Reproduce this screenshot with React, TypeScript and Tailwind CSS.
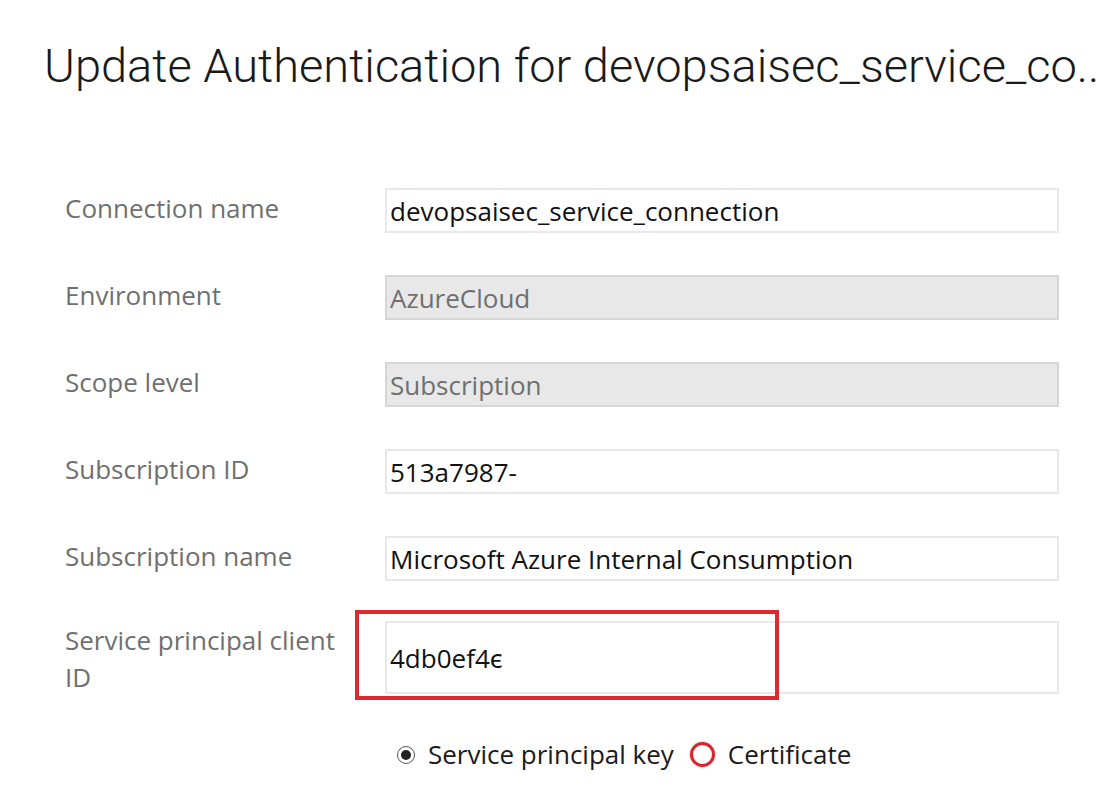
const font = { fontFamily: '"Open Sans", "Noto Sans", sans-serif' };

type Row = { label: string; value: string; disabled?: boolean };

const rows: Row[] = [
  { label: "Connection name", value: "devopsaisec_service_connection" },
  { label: "Environment", value: "AzureCloud", disabled: true },
  { label: "Scope level", value: "Subscription", disabled: true },
  { label: "Subscription ID", value: "513a7987-" },
  { label: "Subscription name", value: "Microsoft Azure Internal Consumption" },
];

function Field({ label, value, disabled }: Row) {
  return (
    <div className="flex items-start">
      <div className="w-[320px] shrink-0 pt-[1px] text-[26px] text-[#6f6f6f]">{label}</div>
      <div
        className={`flex h-[45px] w-[674px] items-center border-2 px-[3px] pt-[2px] text-[26px] ${
          disabled
            ? "border-[#d6d6d6] bg-[#e8e8e8] text-[#6f6f6f]"
            : "border-[#e8e8e8] bg-white text-[#111]"
        }`}
      >
        {value}
      </div>
    </div>
  );
}

export default function App() {
  return (
    <div className="h-[787px] w-[1106px] overflow-hidden bg-white" style={font}>
      <h1
        className="whitespace-nowrap pl-[44px] pt-[34px] text-[47px] font-light leading-[64px] text-[#1a1a1a]"
        style={{ fontFamily: "Roboto, sans-serif" }}
      >
        Update Authentication for devopsaisec_service_co..
      </h1>
      <div className="flex flex-col gap-[42px] pl-[65px] pt-[90px]">
        {rows.map((r) => (
          <Field key={r.label} {...r} />
        ))}
        <div className="-mt-[2px] flex items-start">
          <div className="w-[320px] shrink-0 pt-[1px] text-[26px] leading-[37px] text-[#6f6f6f]">
            Service principal client
            <br />
            ID
          </div>
          <div className="relative flex h-[73px] w-[674px] items-center border-2 border-[#e8e8e8] px-[3px] pt-[2px] text-[26px] text-[#111]">
            4db0ef4&#x03F5;
            <div className="absolute -left-[32px] -top-[13px] h-[90px] w-[424px] border-4 border-[#dc2a30]" />
          </div>
        </div>
        <div className="-mt-[3px] flex items-center pl-[332px] text-[26px] text-[#1a1a1a]">
          <span className="flex h-[18px] w-[18px] items-center justify-center rounded-full border border-[#555]">
            <span className="h-[10px] w-[10px] rounded-full bg-[#222]" />
          </span>
          <span className="ml-[13px]">Service principal key</span>
          <span className="ml-[16px] h-[25px] w-[25px] rounded-full border-[3px] border-[#d9232b] shadow-[0_0_2px_#999]" />
          <span className="ml-[13px]">Certificate</span>
        </div>
      </div>
    </div>
  );
}
